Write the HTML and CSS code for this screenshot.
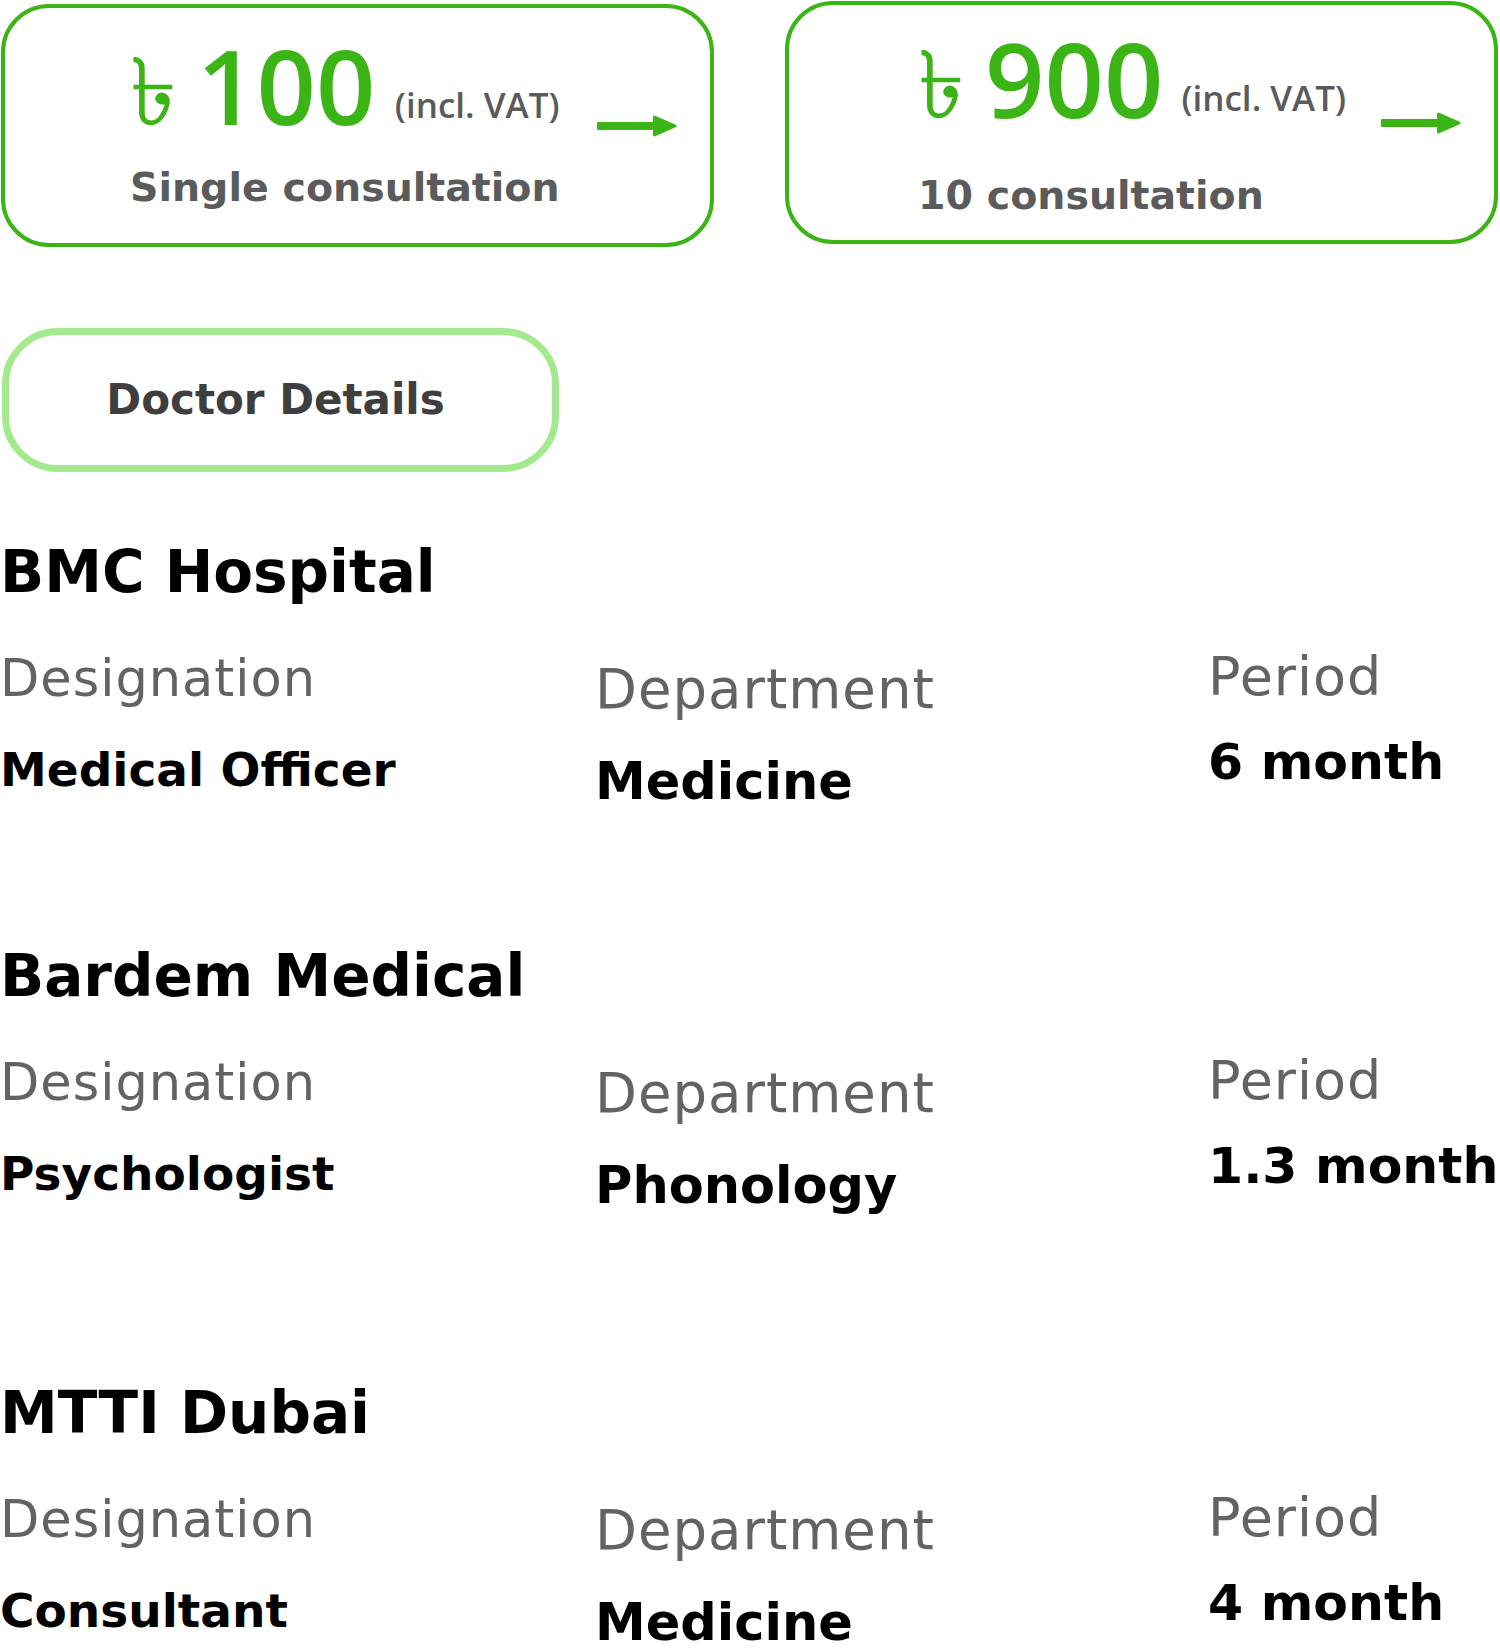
FILE: index.html
```html
<!DOCTYPE html>
<html lang="en">
<head>
<meta charset="utf-8">
<title>Doctor Details</title>
<link rel="stylesheet" href="styles.css">
</head>
<body>
<main class="page">
  <div class="offers">
    <a class="offer offer--single" href="#">
      <div class="offer__body">
        <div class="offer__price">
          <span class="offer__amount"><span class="offer__taka">৳</span><span class="offer__num">100</span></span>
          <span class="offer__vat">(incl. VAT)</span>
        </div>
        <div class="offer__title">Single consultation</div>
      </div>
      <svg class="offer__arrow" viewBox="0 0 80 22" aria-hidden="true">
        <rect x="0" y="7" width="58" height="8" rx="1.2" fill="#3bb515"/>
        <polygon points="57.5,2 78,11 57.5,20" fill="#3bb515" stroke="#3bb515" stroke-width="3" stroke-linejoin="round"/>
      </svg>
    </a>
    <a class="offer offer--pack" href="#">
      <div class="offer__body">
        <div class="offer__price">
          <span class="offer__amount"><span class="offer__taka">৳</span><span class="offer__num">900</span></span>
          <span class="offer__vat">(incl. VAT)</span>
        </div>
        <div class="offer__title">10 consultation</div>
      </div>
      <svg class="offer__arrow" viewBox="0 0 80 22" aria-hidden="true">
        <rect x="0" y="7" width="58" height="8" rx="1.2" fill="#3bb515"/>
        <polygon points="57.5,2 78,11 57.5,20" fill="#3bb515" stroke="#3bb515" stroke-width="3" stroke-linejoin="round"/>
      </svg>
    </a>
  </div>

  <div class="tab">Doctor Details</div>

  <section class="place">
    <h2 class="place__name">BMC Hospital</h2>
    <div class="facts">
      <div class="fact fact--designation"><span class="fact__label">Designation</span><span class="fact__value">Medical Officer</span></div>
      <div class="fact fact--department"><span class="fact__label">Department</span><span class="fact__value">Medicine</span></div>
      <div class="fact fact--period"><span class="fact__label">Period</span><span class="fact__value">6 month</span></div>
    </div>
  </section>

  <section class="place">
    <h2 class="place__name">Bardem Medical</h2>
    <div class="facts">
      <div class="fact fact--designation"><span class="fact__label">Designation</span><span class="fact__value">Psychologist</span></div>
      <div class="fact fact--department"><span class="fact__label">Department</span><span class="fact__value">Phonology</span></div>
      <div class="fact fact--period"><span class="fact__label">Period</span><span class="fact__value">1.3 month</span></div>
    </div>
  </section>

  <section class="place">
    <h2 class="place__name">MTTI Dubai</h2>
    <div class="facts">
      <div class="fact fact--designation"><span class="fact__label">Designation</span><span class="fact__value">Consultant</span></div>
      <div class="fact fact--department"><span class="fact__label">Department</span><span class="fact__value">Medicine</span></div>
      <div class="fact fact--period"><span class="fact__label">Period</span><span class="fact__value">4 month</span></div>
    </div>
  </section>
</main>
</body>
</html>
```

FILE: styles.css
```css
* {
  box-sizing: border-box;
}

html, body {
  margin: 0;
  padding: 0;
  background: #ffffff;
}

body {
  font-family: "DejaVu Sans", "Noto Sans", sans-serif;
  color: #000000;
}

.page {
  width: 1500px;
}

/* ---------- offer cards ---------- */
.offers {
  display: flex;
  align-items: flex-start;
  gap: 71px;
  padding-left: 1px;
}

.offer {
  width: 713px;
  height: 243px;
  border: 4px solid #3bb515;
  border-radius: 48px;
  display: flex;
  align-items: flex-start;
  text-decoration: none;
}

.offer--single {
  margin-top: 4px;
}

.offer--pack {
  margin-top: 1px;
}

.offer__body {
  display: flex;
  flex-direction: column;
}

.offer--single .offer__body {
  padding: 28px 0 0 125px;
  gap: 29px;
}

.offer--pack .offer__body {
  padding: 24px 0 0 129px;
  gap: 44px;
}

.offer__price {
  display: flex;
  align-items: flex-end;
  justify-content: space-between;
  gap: 18px;
}

.offer__amount {
  display: flex;
  align-items: baseline;
  gap: 20px;
  height: 98px;
  color: #3bb515;
}

.offer__taka {
  font-family: "DejaVu Sans", sans-serif;
  font-size: 94px;
  line-height: 60px;
}

.offer__num {
  font-family: "Open Sans", sans-serif;
  font-weight: 600;
  font-size: 104px;
  line-height: 98px;
}

.offer__vat {
  font-family: "Open Sans", sans-serif;
  font-weight: 600;
  font-size: 35px;
  line-height: 59px;
  color: #5b5b5b;
}

.offer__title {
  font-size: 39.5px;
  line-height: 48px;
  font-weight: 700;
  color: #5b5b5b;
}

.offer__arrow {
  align-self: center;
  margin-left: auto;
  margin-right: 33px;
  width: 80px;
  height: 22px;
  flex: none;
}

/* ---------- tab ---------- */
.tab {
  margin: 81px 0 0 2px;
  width: 557px;
  height: 144px;
  border: 7px solid #a3e98e;
  border-radius: 56px;
  display: flex;
  align-items: center;
  justify-content: center;
  padding-right: 10px;
  font-size: 42px;
  line-height: 50px;
  font-weight: 700;
  color: #3e3e3e;
}

/* ---------- places ---------- */
.place {
  margin-top: 129px;
}

.place:first-of-type {
  margin-top: 65px;
}

.place:last-of-type {
  margin-top: 162px;
}

.place__name {
  margin: 0;
  font-size: 58px;
  line-height: 70px;
  font-weight: 700;
  color: #000000;
}

.facts {
  display: grid;
  grid-template-columns: 595px 613px 1fr;
  align-items: start;
  margin-top: 40px;
}

.fact {
  display: flex;
  flex-direction: column;
}

.fact__label {
  line-height: 60px;
  color: #636363;
  letter-spacing: 1px;
}

.fact__value {
  line-height: 60px;
  font-weight: 700;
  color: #000000;
}

.fact--designation {
  padding-top: 2px;
  gap: 31px;
}

.fact--designation .fact__label {
  font-size: 51px;
}

.fact--designation .fact__value {
  font-size: 47px;
}

.fact--department {
  padding-top: 12px;
  gap: 33px;
}

.fact--department .fact__label {
  font-size: 54.5px;
}

.fact--department .fact__value {
  font-size: 51px;
}

.fact--period {
  gap: 25px;
}

.fact--period .fact__label {
  font-size: 54px;
}

.fact--period .fact__value {
  font-size: 50.5px;
}
```
